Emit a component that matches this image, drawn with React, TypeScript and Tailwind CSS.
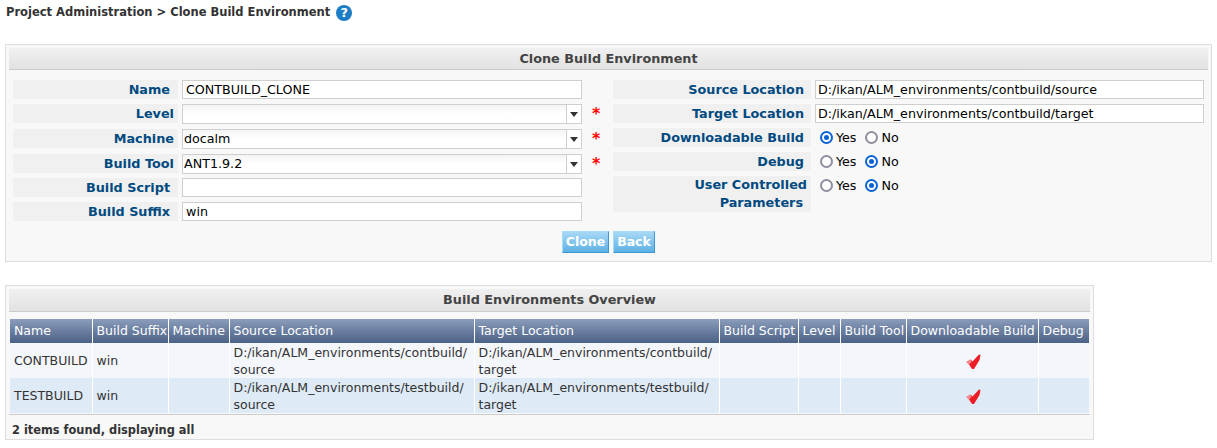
const labelCls = "flex items-center justify-end bg-[#f0f0f0] text-[12.8px] font-bold text-[#004a80] leading-[18px]";
const inputCls = "flex items-center h-[19px] border border-[#cfcfcf] bg-white text-[12.7px] text-black";

function Label({ text, className = "" }: { text: string; className?: string }) {
  return <div className={`${labelCls} ${className}`}>{text}</div>;
}

function TextRow({ label, value }: { label: string; value: string }) {
  return (
    <div className="flex h-[19px] gap-[4px]">
      <Label text={label} className="w-[165px] pr-[8px]" />
      <div className={`${inputCls} w-[400px] pl-[3px]`}>{value}</div>
    </div>
  );
}

function SelectRow({ label, value }: { label: string; value: string }) {
  return (
    <div className="flex h-[20px] gap-[4px] items-start">
      <Label text={label} className="w-[165px] h-[19px] pr-[4px]" />
      <div className="flex h-[20px] w-[400px] border border-[#cfcfcf] bg-gradient-to-b from-[#f4f4f4] via-white to-white text-[12.7px] text-black">
        <div className="flex-1 flex items-center pl-[1px]">{value}</div>
        <div className="w-[15px] border-l border-[#cfcfcf] bg-white flex items-center justify-center">
          <div className="w-0 h-0 border-l-[4px] border-r-[4px] border-t-[5px] border-l-transparent border-r-transparent border-t-[#333]" />
        </div>
      </div>
      <div className="ml-[6px] text-[16px] font-bold leading-[20px] text-[#ff0000]">*</div>
    </div>
  );
}

function Radio({ on, text }: { on: boolean; text: string }) {
  return (
    <div className="flex items-center gap-[3px] text-[12.7px] text-black">
      <div className={on
        ? "w-[13px] h-[13px] rounded-full border-2 border-[#0b63d6] bg-white flex items-center justify-center"
        : "w-[13px] h-[13px] rounded-full border-2 border-[#8f8f9d] bg-white flex items-center justify-center"}>
        {on && <div className="w-[5px] h-[5px] rounded-full bg-[#0b63d6]" />}
      </div>
      <span>{text}</span>
    </div>
  );
}

function RadioRow({ label, yes, tall }: { label: string; yes: boolean; tall?: boolean }) {
  return (
    <div className="flex gap-[4px]">
      {tall ? (
        <div className="flex flex-col items-end w-[198px] h-[36px] bg-[#f0f0f0] text-[12.8px] font-bold leading-[18px] text-[#004a80]">
          <div className="pr-[4px]">User Controlled</div>
          <div className="pr-[8px]">Parameters</div>
        </div>
      ) : (
        <Label text={label} className="w-[198px] h-[19px] pr-[7px]" />
      )}
      <div className="flex h-[19px] items-center gap-[9px] pl-[5px]">
        <Radio on={yes} text="Yes" />
        <Radio on={!yes} text="No" />
      </div>
    </div>
  );
}

function PanelTitle({ text, h }: { text: string; h: string }) {
  return (
    <div className={`flex items-center justify-center ${h} border-b border-[#cccccc] bg-gradient-to-b from-[#f0f0f0] to-[#e2e2e2] text-[12.8px] font-bold text-[#444444]`}>
      {text}
    </div>
  );
}

function Btn({ text, w }: { text: string; w: string }) {
  return (
    <div className={`flex items-center justify-center h-[22px] pt-[1px] ${w} border border-t-[#a9dcf6] border-l-[#a9dcf6] border-r-[#3f97d2] border-b-[#3f97d2] bg-gradient-to-b from-[#a6d8f5] to-[#5cb2e6] text-[12.5px] font-bold text-white`}>
      {text}
    </div>
  );
}

function Check() {
  return (
    <svg width="16" height="16" viewBox="0 0 16 16" className="ml-[55px] mt-[2px] block">
      <path d="M0.5 8 L4.5 5.5 L6.5 7.5 L13 0.5 L14.5 1 L13.5 6 L8 15 L6 15 L3 10.5 Z" fill="#ee1c25" />
      <path d="M0.5 8 L4.5 5.5 L5.5 8 L3 10.5 Z" fill="#f58a8f" />
    </svg>
  );
}

const cols = [82, 76, 61, 245, 245, 79, 42, 66, 132, 51];
const heads = ["Name", "Build Suffix", "Machine", "Source Location", "Target Location", "Build Script", "Level", "Build Tool", "Downloadable Build", "Debug"];
const rows = [
  { name: "CONTBUILD", folder: "contbuild", bg: "bg-[#f3f6fb]" },
  { name: "TESTBUILD", folder: "testbuild", bg: "bg-[#deeaf6]" },
];

const tdCls = "border-r border-white px-[4px] align-middle leading-[17px] last:border-r-0";

export default function App() {
  return (
    <div className="relative w-[1217px] h-[448px] overflow-hidden bg-white font-['DejaVu_Sans',sans-serif]">
      <div className="flex items-center h-[25px] pl-[6px] text-[11.5px] font-bold text-[#333333]">
        Project Administration &gt; Clone Build Environment
        <div className="ml-[6px] flex items-center justify-center w-[16px] h-[16px] rounded-full bg-[#1c7cc4] text-[13px] font-bold leading-none text-white">?</div>
      </div>

      <div className="mt-[19px] ml-[5px] w-[1207px] h-[218px] border border-[#dddddd] bg-[#f8f8f8] p-[3px]">
        <PanelTitle text="Clone Build Environment" h="h-[22px]" />
        <div className="flex mt-[10px] pl-[4px]">
          <div className="w-[600px] flex flex-col">
            <TextRow label="Name" value="CONTBUILD_CLONE" />
            <div className="mt-[5px]"><SelectRow label="Level" value="" /></div>
            <div className="mt-[5px]"><SelectRow label="Machine" value="docalm" /></div>
            <div className="mt-[5px]"><SelectRow label="Build Tool" value="ANT1.9.2" /></div>
            <div className="mt-[4px]"><TextRow label="Build Script" value="" /></div>
            <div className="mt-[5px]"><TextRow label="Build Suffix" value="win" /></div>
          </div>
          <div className="flex flex-col gap-[5px]">
            <div className="flex h-[19px] gap-[4px]">
              <Label text="Source Location" className="w-[198px] pr-[7px]" />
              <div className={`${inputCls} w-[389px] pl-[2px]`}>D:/ikan/ALM_environments/contbuild/source</div>
            </div>
            <div className="flex h-[19px] gap-[4px]">
              <Label text="Target Location" className="w-[198px] pr-[7px]" />
              <div className={`${inputCls} w-[389px] pl-[2px]`}>D:/ikan/ALM_environments/contbuild/target</div>
            </div>
            <RadioRow label="Downloadable Build" yes={true} />
            <RadioRow label="Debug" yes={false} />
            <RadioRow label="User Controlled Parameters" yes={false} tall />
          </div>
        </div>
        <div className="flex justify-center gap-[4px] mt-[10px]">
          <Btn text="Clone" w="w-[47px]" />
          <Btn text="Back" w="w-[42px]" />
        </div>
      </div>

      <div className="mt-[23px] ml-[5px] w-[1089px] h-[155px] border border-[#dddddd] bg-[#f8f8f8] p-[3px]">
        <PanelTitle text="Build Environments Overview" h="h-[23px]" />
        <div className="mt-[7px] pl-[1px]">
          <table className="table-fixed border-collapse w-[1079px] text-[12.5px]">
            <colgroup>
              {cols.map((w, i) => <col key={i} style={{ width: w }} />)}
            </colgroup>
            <thead>
              <tr className="h-[24px] bg-gradient-to-b from-[#8b9dbb] to-[#4b6186] text-white">
                {heads.map((h) => (
                  <th key={h} className="border-r border-white px-[4px] text-left font-normal whitespace-nowrap last:border-r-0">{h}</th>
                ))}
              </tr>
            </thead>
            <tbody className="text-[#333333]">
              {rows.map((r) => (
                <tr key={r.name} className={`h-[35px] ${r.bg}`}>
                  <td className={tdCls}>{r.name}</td>
                  <td className={tdCls}>win</td>
                  <td className={tdCls} />
                  <td className={tdCls}>D:/ikan/ALM_environments/{r.folder}/<br />source</td>
                  <td className={tdCls}>D:/ikan/ALM_environments/{r.folder}/<br />target</td>
                  <td className={tdCls} />
                  <td className={tdCls} />
                  <td className={tdCls} />
                  <td className={tdCls}><Check /></td>
                  <td className={tdCls} />
                </tr>
              ))}
            </tbody>
          </table>
        </div>
        <div className="mt-[1px] border-t border-[#cccccc] pl-[3px] pt-[7px] text-[11.4px] font-bold text-[#333333]">
          2 items found, displaying all
        </div>
      </div>
    </div>
  );
}
